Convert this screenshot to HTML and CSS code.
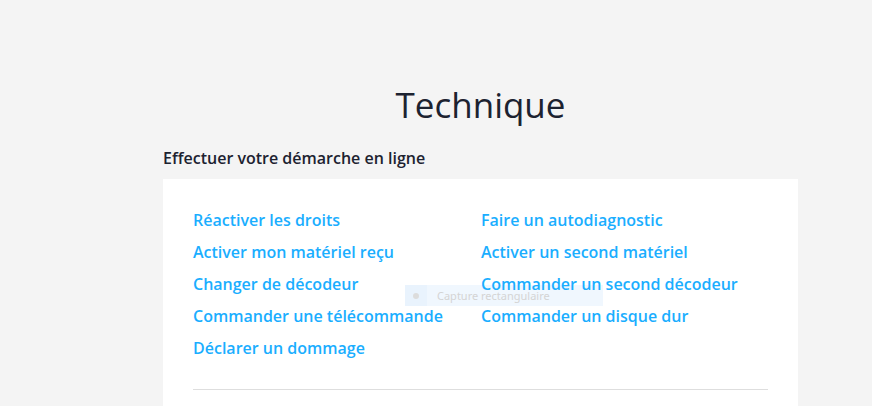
FILE: index.html
```html
<!DOCTYPE html>
<html lang="fr">
<head>
<meta charset="utf-8">
<title>Technique</title>
<link rel="stylesheet" href="styles.css">
</head>
<body>
<main class="page">
  <h1 class="title">Technique</h1>
  <h2 class="subtitle">Effectuer votre démarche en ligne</h2>
  <section class="card">
    <div class="links">
      <a class="link" href="#">Réactiver les droits</a>
      <a class="link" href="#">Faire un autodiagnostic</a>
      <a class="link" href="#">Activer mon matériel reçu</a>
      <a class="link" href="#">Activer un second matériel</a>
      <a class="link" href="#">Changer de décodeur</a>
      <a class="link" href="#">Commander un second décodeur</a>
      <a class="link" href="#">Commander une télécommande</a>
      <a class="link" href="#">Commander un disque dur</a>
      <a class="link" href="#">Déclarer un dommage</a>
    </div>
    <hr class="divider">
  </section>
</main>
<div class="capture"><span class="capture-icon"><span class="capture-dot"></span></span><span class="capture-text">Capture rectangulaire</span></div>
</body>
</html>
```

FILE: styles.css
```css
html, body {
  margin: 0;
  padding: 0;
  background: #f4f4f4;
  font-family: "Open Sans", "Noto Sans", sans-serif;
  height: 100%;
  overflow: hidden;
}

.page {
  width: 635px;
  margin-left: 163px;
  padding-top: 81px;
}

.title {
  margin: 0;
  text-align: center;
  font-size: 35px;
  font-weight: 400;
  line-height: 48px;
  color: #1c2230;
}

.subtitle {
  margin: 18px 0 0;
  font-size: 16px;
  font-weight: 600;
  line-height: 22px;
  color: #1c2230;
}

.card {
  margin-top: 10px;
  background: #ffffff;
  padding: 25px 30px 20px;
  height: 200px;
}

.links {
  display: grid;
  grid-template-columns: 288px 1fr;
  grid-auto-rows: 32px;
}

.link {
  position: relative;
  z-index: 1;
  font-size: 16px;
  font-weight: 600;
  line-height: 32px;
  color: #1aaeff;
  text-decoration: none;
  white-space: nowrap;
}

.divider {
  margin: 25px 0 0;
  border: 0;
  border-top: 1px solid #dedede;
}

.capture {
  position: absolute;
  left: 405px;
  top: 285px;
  width: 198px;
  height: 21px;
  display: flex;
  align-items: center;
  background: #f0f7fe;
  z-index: 0;
}

.capture-icon {
  width: 22px;
  height: 21px;
  background: #e9f3fd;
  display: flex;
  align-items: center;
  justify-content: center;
}

.capture-dot {
  width: 6px;
  height: 6px;
  border-radius: 50%;
  background: #dcdcdc;
}

.capture-text {
  margin-left: 10px;
  font-family: "Noto Sans", "Open Sans", sans-serif;
  font-size: 11px;
  color: #d4d4d4;
}
```
